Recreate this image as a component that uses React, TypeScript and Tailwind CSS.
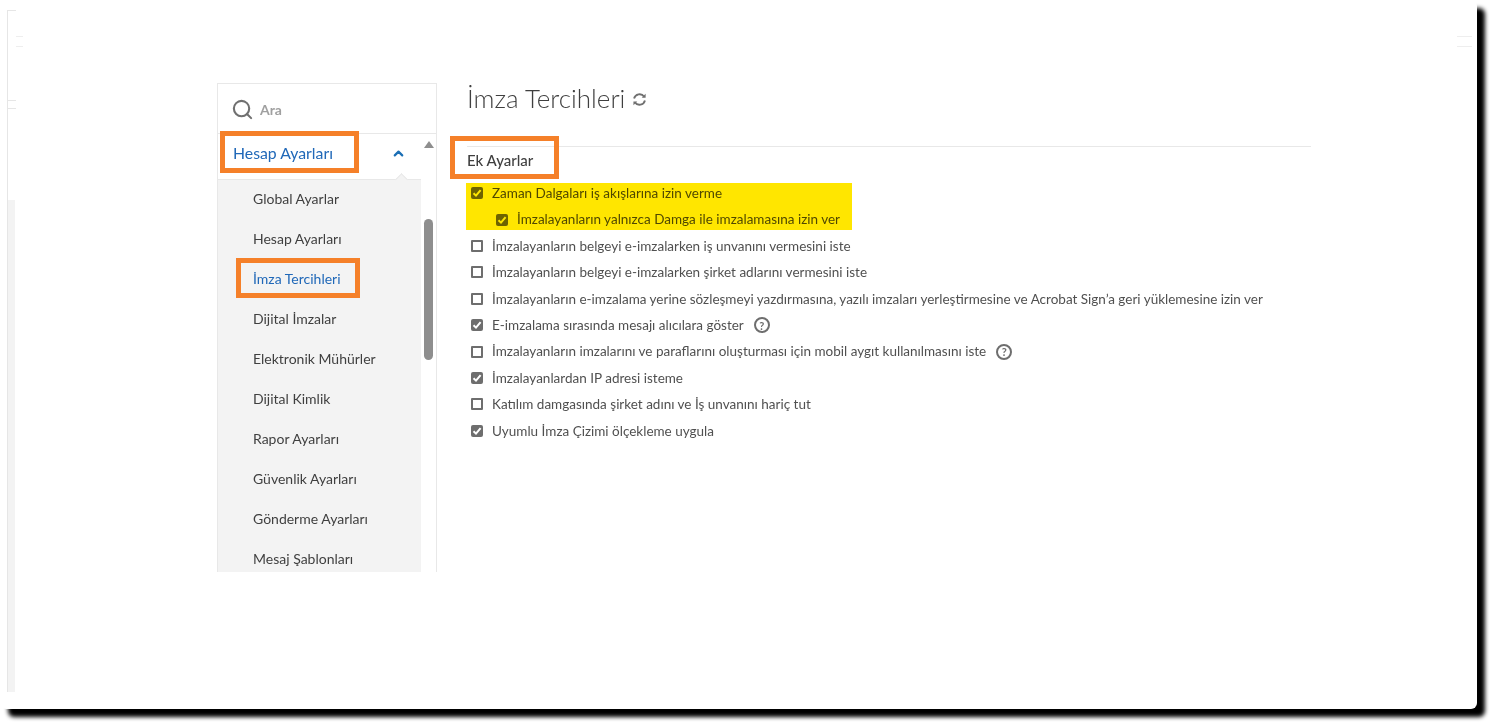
import { ChevronUp, Search } from 'lucide-react';

const menuItems = [
  'Global Ayarlar',
  'Hesap Ayarları',
  'İmza Tercihleri',
  'Dijital İmzalar',
  'Elektronik Mühürler',
  'Dijital Kimlik',
  'Rapor Ayarları',
  'Güvenlik Ayarları',
  'Gönderme Ayarları',
  'Mesaj Şablonları',
];

const settings = [
  { label: 'Zaman Dalgaları iş akışlarına izin verme', checked: true },
  { label: 'İmzalayanların yalnızca Damga ile imzalamasına izin ver', checked: true, nested: true },
  { label: 'İmzalayanların belgeyi e-imzalarken iş unvanını vermesini iste', checked: false },
  { label: 'İmzalayanların belgeyi e-imzalarken şirket adlarını vermesini iste', checked: false },
  { label: 'İmzalayanların e-imzalama yerine sözleşmeyi yazdırmasına, yazılı imzaları yerleştirmesine ve Acrobat Sign’a geri yüklemesine izin ver', checked: false },
  { label: 'E-imzalama sırasında mesajı alıcılara göster', checked: true, help: true },
  { label: 'İmzalayanların imzalarını ve paraflarını oluşturması için mobil aygıt kullanılmasını iste', checked: false, help: true },
  { label: 'İmzalayanlardan IP adresi isteme', checked: true },
  { label: 'Katılım damgasında şirket adını ve İş unvanını hariç tut', checked: false },
  { label: 'Uyumlu İmza Çizimi ölçekleme uygula', checked: true },
];

function Checkbox({ checked }: { checked: boolean }) {
  if (!checked) {
    return <span className="block w-3 h-3 shrink-0 rounded-[1px] border-2 border-[#6e6e6e] bg-white" />;
  }
  return (
    <span className="flex items-center justify-center w-3 h-3 shrink-0 rounded-[2px] bg-[#6e6e6e]">
      <svg className="w-[10px] h-[10px]" viewBox="0 0 10 10" fill="none" stroke="white" strokeWidth={2}>
        <path d="M1.5 5.2 L4 7.6 L8.6 2.2" />
      </svg>
    </span>
  );
}

function HelpIcon() {
  return (
    <span className="flex items-center justify-center w-4 h-4 ml-[10px] rounded-full border-2 border-[#6e6e6e] text-[11px] font-bold leading-none text-[#6e6e6e]">
      ?
    </span>
  );
}

function Highlight({ className }: { className: string }) {
  return <span className={`absolute border-[5px] border-[#f58029] pointer-events-none ${className}`} />;
}

export default function App() {
  return (
    <div className="relative w-[1491px] h-[723px] overflow-hidden bg-white font-['Lato','Noto_Sans',sans-serif] text-[#505050]">
      <div className="relative w-[1477px] h-[709px] rounded-[6px] bg-white shadow-[8px_8px_4px_#000]">
        {/* faint leftovers of the page behind the crop */}
        <div className="absolute left-[7px] top-[10px] h-[682px] w-px bg-[#e6e6e6]" />
        <div className="absolute left-[8px] top-[200px] h-[492px] w-[7px] bg-[#f3f3f3]" />
        <div className="absolute left-[8px] top-[10px] h-px w-[8px] bg-[#e6e6e6]" />
        <div className="absolute left-[8px] top-[100px] h-px w-[8px] bg-[#e6e6e6]" />
        <div className="absolute left-[8px] top-[108px] h-px w-[8px] bg-[#e6e6e6]" />
        <div className="absolute left-[16px] top-[36px] h-px w-[7px] bg-[#eeeeee]" />
        <div className="absolute left-[16px] top-[46px] h-px w-[7px] bg-[#eeeeee]" />
        <div className="absolute left-[1457px] top-[36px] h-px w-[15px] bg-[#eeeeee]" />
        <div className="absolute left-[1457px] top-[46px] h-px w-[15px] bg-[#eeeeee]" />

        <div className="flex pl-[217px] pt-[83px]">
          <aside className="flex flex-col w-[220px] h-[489px] overflow-hidden border-x border-t border-[#e8e8e8]">
            <div className="flex items-center h-[50px] shrink-0 pl-[13px] pt-px gap-[6px] border-b border-[#e8e8e8]">
              <Search className="w-[23px] h-[23px] text-[#707070]" strokeWidth={2.2} />
              <span className="text-[14px] font-bold text-[#a0a0a0]">Ara</span>
            </div>
            <div className="flex flex-1 min-h-0">
              <div className="flex flex-col w-[203px] shrink-0 min-h-0">
                <div className="relative flex items-center justify-between h-[46px] shrink-0 pl-[15px] pr-[15px] pb-[7px] bg-white border-b border-[#e8e8e8]">
                  <span className="text-[15.8px] text-[#2068b8]">Hesap Ayarları</span>
                  <ChevronUp className="w-[15px] h-[15px] text-[#1b6fb5]" strokeWidth={3.5} />
                  <span className="absolute right-[15px] -bottom-[5px] w-[9px] h-[9px] rotate-45 bg-[#f3f3f3] border-l border-t border-[#e8e8e8]" />
                </div>
                <ul className="flex-1 bg-[#f3f3f3] pl-[35px]">
                  {menuItems.map((item) => (
                    <li
                      key={item}
                      className={`flex items-center h-10 pb-1 text-[14px] ${item === 'İmza Tercihleri' ? 'text-[#2068b8]' : 'text-[#3f3f3f]'}`}
                    >
                      {item}
                    </li>
                  ))}
                </ul>
              </div>
              <div className="relative flex-1">
                <span className="absolute left-[3px] top-[7px] w-0 h-0 border-x-[5px] border-x-transparent border-b-[7px] border-b-[#8e8e8e]" />
                <span className="absolute left-[3px] top-[85px] w-[9px] h-[141px] rounded-full bg-[#8e8e8e]" />
              </div>
            </div>
          </aside>

          <main className="ml-[30px] w-[844px]">
            <div className="flex items-center h-[32px] -mt-[1px]">
              <h1 className="text-[26px] font-light leading-none text-[#3f3f3f]">İmza Tercihleri</h1>
              <svg className="ml-[7px] mt-[3px] w-[15px] h-[15px]" viewBox="0 0 16 16" fill="none" stroke="#707070" strokeWidth={2}>
                <path d="M2.2 7 A6 6 0 0 1 13 5" />
                <path d="M13.8 9 A6 6 0 0 1 3 11" />
                <path d="M14.5 1.8 V6 H10.4 Z" fill="#707070" stroke="none" />
                <path d="M1.5 14.2 V10 H5.6 Z" fill="#707070" stroke="none" />
              </svg>
            </div>
            <div className="mt-[32px] border-t border-[#e8e8e8] h-[30px] pb-[2px] flex items-center">
              <h2 className="text-[15px] font-medium text-[#3f3f3f]">Ek Ayarlar</h2>
            </div>
            <ul className="relative mt-[4px]">
              {settings.map((s) => (
                <li
                  key={s.label}
                  className={`flex items-center h-[26.4px] text-[13.5px] whitespace-nowrap ${s.nested ? 'pl-[29px]' : 'pl-[4px]'}`}
                >
                  <Checkbox checked={s.checked} />
                  <span className="ml-[9px]">{s.label}</span>
                  {s.help && <HelpIcon />}
                </li>
              ))}
              <span className="absolute -left-px top-[3px] w-[386px] h-[47px] bg-[#ffe600] mix-blend-multiply" />
            </ul>
          </main>
        </div>

        {/* orange callouts drawn over the screenshot */}
        <Highlight className="left-[220px] top-[131px] w-[139px] h-[42px]" />
        <Highlight className="left-[236px] top-[258px] w-[124px] h-[40px]" />
        <Highlight className="left-[450px] top-[136px] w-[109px] h-[43px]" />
      </div>
    </div>
  );
}
